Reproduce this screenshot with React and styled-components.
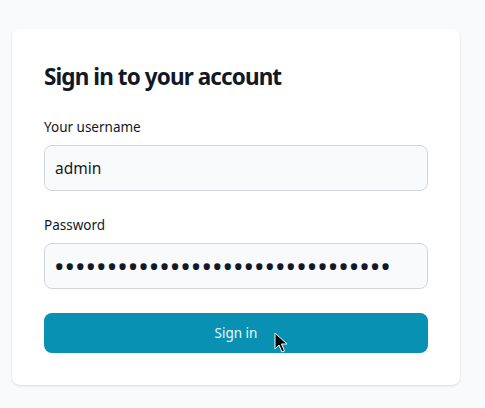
import React from "react";
import styled, { createGlobalStyle } from "styled-components";

const Global = createGlobalStyle`
  html, body { margin: 0; padding: 0; background: #f9fafb; }
  body { font-family: "Noto Sans", "Open Sans", sans-serif; color: #111827; }
  * { box-sizing: border-box; }
`;

const Page = styled.main`
  min-height: 408px;
  padding: 29px 0 0 12px;
`;

const Card = styled.section`
  position: relative;
  width: 448px;
  background: #ffffff;
  border-radius: 8px;
  box-shadow: 0 1px 3px rgba(0, 0, 0, 0.1), 0 1px 2px -1px rgba(0, 0, 0, 0.1);
  padding: 32px;
  display: flex;
  flex-direction: column;
  gap: 24px;
`;

const Title = styled.h1`
  margin: 0;
  font-size: 22.5px;
  line-height: 32px;
  font-weight: 700;
  letter-spacing: -0.04em;
  color: #111827;
`;

const Form = styled.form`
  display: flex;
  flex-direction: column;
  gap: 24px;
`;

const Field = styled.div`
  display: flex;
  flex-direction: column;
`;

const Label = styled.label`
  display: block;
  margin-bottom: 8px;
  font-size: 13.5px;
  line-height: 20px;
  font-weight: 400;
  color: #111827;
`;

const Input = styled.input`
  display: block;
  width: 100%;
  height: 46px;
  padding: ${(p) => (p.$secret ? "0 10px 0 9px" : "10px")};
  font-family: inherit;
  font-size: ${(p) => (p.$secret ? "28px" : "15.5px")};
  line-height: 24px;
  color: #111827;
  background: #f9fafb;
  border: 1px solid #d1d5db;
  border-radius: 8px;
  outline: none;
`;

const Button = styled.button`
  display: block;
  width: 100%;
  height: 40px;
  border: none;
  border-radius: 8px;
  background: #0891b2;
  color: #eef8fb;
  font-family: inherit;
  font-size: 13.5px;
  font-weight: 400;
  line-height: 20px;
  cursor: pointer;
`;

const Pointer = styled.svg`
  position: absolute;
  left: 262px;
  top: 303px;
  width: 14px;
  height: 22px;
`;

export default function App() {
  return (
    <>
      <Global />
      <Page>
        <Card>
          <Title>Sign in to your account</Title>
          <Form onSubmit={(e) => e.preventDefault()}>
            <Field>
              <Label htmlFor="username">Your username</Label>
              <Input id="username" type="text" defaultValue="admin" />
            </Field>
            <Field>
              <Label htmlFor="password">Password</Label>
              <Input
                id="password"
                type="password"
                $secret
                defaultValue={"a".repeat(32)}
              />
            </Field>
            <Button type="submit">Sign in</Button>
          </Form>
          <Pointer viewBox="0 0 14 22">
            <path
              d="M1 1 L1 17 L5 13 L8 20 L10.5 19 L7.5 12 L13 12 Z"
              fill="#000"
              stroke="#fff"
              strokeWidth="1"
              strokeLinejoin="round"
            />
          </Pointer>
        </Card>
      </Page>
    </>
  );
}
